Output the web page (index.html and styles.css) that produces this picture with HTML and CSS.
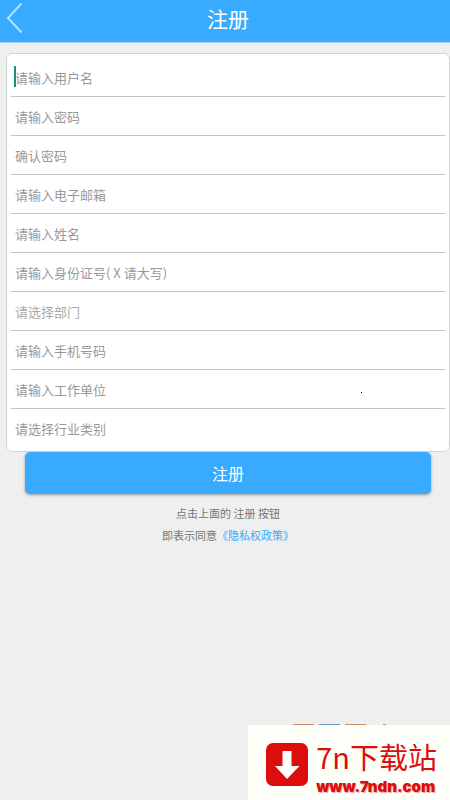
FILE: index.html
```html
<!DOCTYPE html>
<html lang="zh-CN">
<head>
<meta charset="utf-8">
<meta name="viewport" content="width=device-width, initial-scale=1">
<title>注册</title>
<link rel="stylesheet" href="styles.css">
</head>
<body>
<header class="bar">
  <button class="back" type="button" aria-label="返回">
    <svg viewBox="0 0 18 32" width="18" height="32" aria-hidden="true"><path d="M15.500 1.500 2 16l13.500 14.500"/></svg>
  </button>
  <h1 class="title">注册</h1>
</header>
<main>
  <form class="form">
    <div class="card">
      <div class="row active"><input type="text" aria-label="用户名" placeholder="请输入用户名"></div>
      <div class="row"><input type="password" aria-label="密码" placeholder="请输入密码"></div>
      <div class="row"><input type="password" aria-label="确认密码" placeholder="确认密码"></div>
      <div class="row"><input type="email" aria-label="电子邮箱" placeholder="请输入电子邮箱"></div>
      <div class="row"><input type="text" aria-label="姓名" placeholder="请输入姓名"></div>
      <div class="row"><input type="text" aria-label="身份证号" placeholder="请输入身份证号( X 请大写)"></div>
      <div class="row"><select class="light" aria-label="部门"><option>请选择部门</option></select></div>
      <div class="row"><input type="tel" aria-label="手机号码" placeholder="请输入手机号码"></div>
      <div class="row dotted"><input type="text" aria-label="工作单位" placeholder="请输入工作单位"></div>
      <div class="row"><select aria-label="行业类别"><option>请选择行业类别</option></select></div>
    </div>
    <button class="submit" type="submit">注册</button>
    <p class="note">点击上面的 注册 按钮<br>即表示同意<a href="#">《隐私权政策》</a></p>
  </form>
</main>
<footer class="brand">
  <span class="tabs" aria-hidden="true"><i></i><i></i><i></i><i></i></span>
  <svg class="logo" viewBox="0 0 44 44" width="44" height="44" aria-hidden="true">
    <rect x="1" y="0" width="42" height="43" rx="7"/>
    <path d="M17.500 8h9v15h8L22 36 10 23h7.500z"/>
  </svg>
  <div>
    <div class="name">7n下载站</div>
    <div class="site">www.7ndn.com</div>
  </div>
</footer>
</body>
</html>
```

FILE: styles.css
```css
* {
  box-sizing: border-box;
}

body {
  margin: 0;
  min-height: 100vh;
  display: flex;
  flex-direction: column;
  background: #efefef;
  color: #757575;
  font-family: "Noto Sans CJK SC", sans-serif;
}

button,
input,
select {
  font: inherit;
}

.bar {
  display: grid;
  grid-template-columns: 32px 1fr 32px;
  align-items: center;
  height: 43px;
  padding: 0 0 6px 6px;
  background: #38aaff;
  border-bottom: 1px solid #a6d4f6;
}

.back {
  display: flex;
  padding: 0;
  border: 0;
  background: none;
}

.back path {
  fill: none;
  stroke: #b5e2ff;
  stroke-width: 2;
}

.title {
  margin: 0;
  color: #fff;
  font-size: 21px;
  font-weight: 400;
  line-height: 32px;
  text-align: center;
}

.form {
  display: flex;
  flex-direction: column;
  padding: 10px 0 0 6px;
}

.card {
  padding: 4px 4px 3px;
  background: #fff;
  border: 1px solid #d2d2d2;
  border-radius: 6px;
}

.row {
  position: relative;
  height: 39px;
  border-bottom: 1px solid #c4c4c4;
}

.row:last-child {
  border-bottom: 0;
}

.row input,
.row select {
  display: block;
  width: 100%;
  height: 38px;
  padding: 0 4px;
  border: 0;
  outline: 0;
  appearance: none;
  background: transparent;
  color: #999;
  font-size: 13px;
}

.row input::placeholder {
  color: #999;
  opacity: 1;
}

.row .light {
  color: #aaa;
}

/* Text caret of the active field */
.active::before {
  content: "";
  position: absolute;
  left: 3px;
  top: 8px;
  width: 2px;
  height: 21px;
  background: #16917c;
}

.dotted::after {
  content: "";
  position: absolute;
  right: 83px;
  top: 22px;
  width: 1px;
  height: 1px;
  background: #000;
}

.submit {
  height: 42px;
  margin: 0 19px;
  padding: 0;
  border: 0;
  border-radius: 5px;
  background: #38aaff;
  box-shadow: 0 1px 3px #999;
  color: #fff;
  font-size: 16px;
}

.note {
  margin: 8px 0 0;
  font-size: 11px;
  line-height: 22px;
  text-align: center;
}

.note a {
  color: #38aaff;
  text-decoration: none;
}

.brand {
  position: relative;
  display: flex;
  align-items: center;
  gap: 7px;
  align-self: flex-end;
  margin-top: auto;
  height: 75px;
  padding: 5px 13px 0 17px;
  background: #fffffa;
}

/* Top edge of the tab icons showing behind the banner */
.tabs {
  position: absolute;
  left: 45px;
  top: -1px;
  display: flex;
  gap: 5px;
}

.tabs i {
  width: 21px;
  height: 1px;
  background: #c98a68;
}

.tabs i:nth-child(2) {
  background: #6f9dc0;
}

.tabs i:nth-child(4) {
  width: 3px;
  margin-left: 12px;
  background: #999;
}

.logo rect {
  fill: #dc0d0d;
}

.logo path {
  fill: #fff;
}

.name {
  color: #dc0d0d;
  font-size: 29px;
  line-height: 43px;
}

.site {
  color: #dc0d0d;
  font-family: Inter, sans-serif;
  font-size: 15px;
  font-weight: 900;
  line-height: 18px;
  text-shadow: 1px 1px 1px #e9a5a0;
}
```
